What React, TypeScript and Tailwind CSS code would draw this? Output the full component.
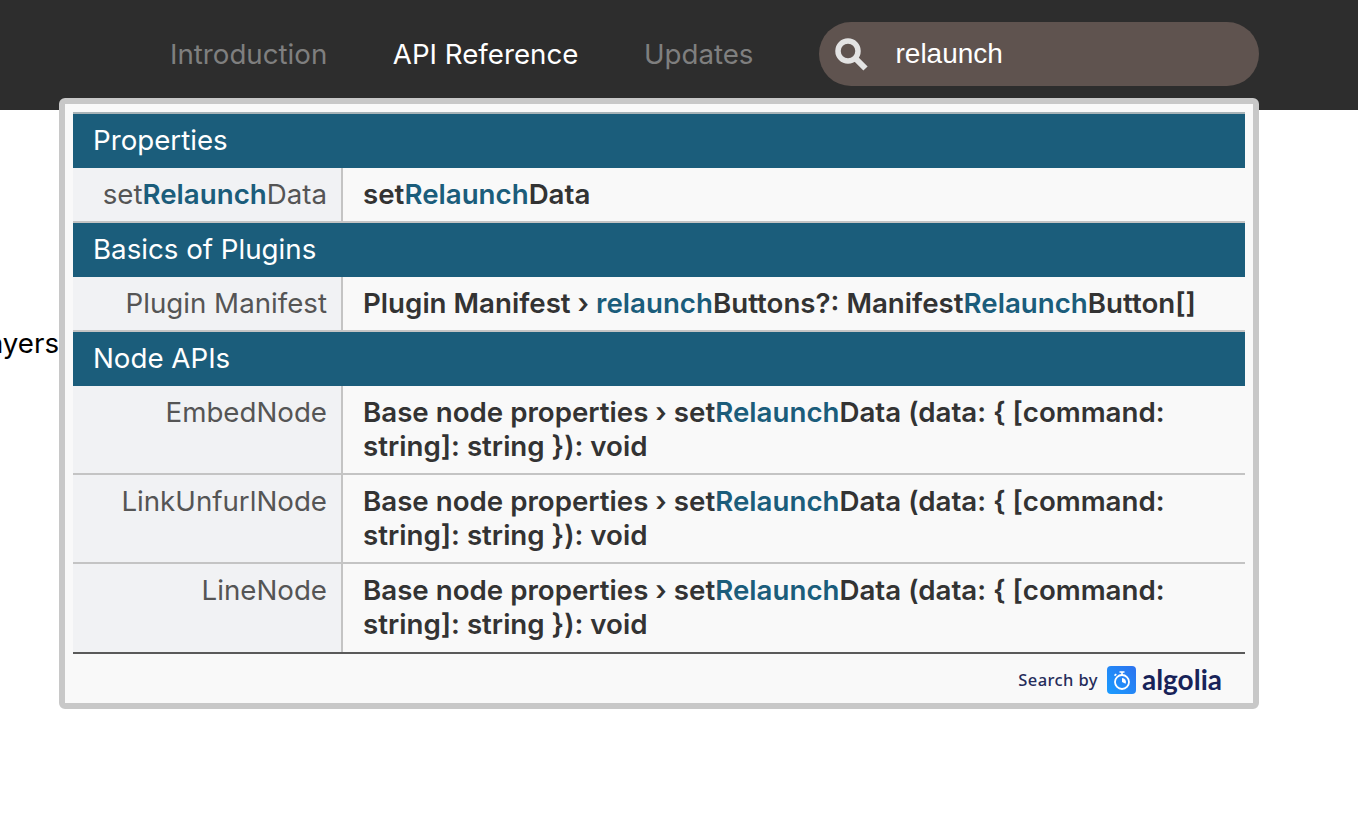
const font = { inter: "font-['Inter',sans-serif]" };

type Part = { text: string; hit?: boolean };
type Row = { label: Part[]; title: Part[]; tall?: boolean };
type Section = { name: string; rows: Row[] };

const baseNodeTitle: Part[] = [
  { text: "Base node properties › set" },
  { text: "Relaunch", hit: true },
  { text: "Data (data: { [command: string]: string }): void" },
];

const sections: Section[] = [
  {
    name: "Properties",
    rows: [
      {
        label: [{ text: "set" }, { text: "Relaunch", hit: true }, { text: "Data" }],
        title: [{ text: "set" }, { text: "Relaunch", hit: true }, { text: "Data" }],
      },
    ],
  },
  {
    name: "Basics of Plugins",
    rows: [
      {
        label: [{ text: "Plugin Manifest" }],
        title: [
          { text: "Plugin Manifest › " },
          { text: "relaunch", hit: true },
          { text: "Buttons?: Manifest" },
          { text: "Relaunch", hit: true },
          { text: "Button[]" },
        ],
      },
    ],
  },
  {
    name: "Node APIs",
    rows: [
      { label: [{ text: "EmbedNode" }], title: baseNodeTitle, tall: true },
      { label: [{ text: "LinkUnfurlNode" }], title: baseNodeTitle, tall: true },
      { label: [{ text: "LineNode" }], title: baseNodeTitle, tall: true },
    ],
  },
];

function Highlighted({ parts }: { parts: Part[] }) {
  return (
    <>
      {parts.map((part, i) =>
        part.hit ? (
          <span key={i} className="font-semibold text-[#1b5d7b]">
            {part.text}
          </span>
        ) : (
          <span key={i}>{part.text}</span>
        )
      )}
    </>
  );
}

function SearchIcon() {
  return (
    <svg width="34" height="34" viewBox="0 0 34 34" fill="none" className="shrink-0">
      <circle cx="14" cy="14" r="10" stroke="#e3e3e3" strokeWidth="5.5" />
      <path d="M21 21l10.5 10.5" stroke="#e3e3e3" strokeWidth="6" />
    </svg>
  );
}

function AlgoliaMark() {
  return (
    <svg width="29" height="28" viewBox="0 0 29 28" fill="none" className="shrink-0">
      <defs>
        <linearGradient id="algoliaBg" x1="0" y1="28" x2="29" y2="0" gradientUnits="userSpaceOnUse">
          <stop stopColor="#1a9cff" />
          <stop offset="1" stopColor="#2d72ee" />
        </linearGradient>
      </defs>
      <rect width="29" height="28" rx="4" fill="url(#algoliaBg)" />
      <circle cx="15" cy="16" r="7" stroke="#fff" strokeWidth="1.8" />
      <path d="M15 16V12A4 4 0 0 1 18.6 17.7Z" fill="#fff" />
      <path d="M12.5 6h5M15 6v3" stroke="#fff" strokeWidth="1.6" />
      <path d="M7.5 9.7l1.8-1.6" stroke="#fff" strokeWidth="1.6" />
    </svg>
  );
}

function ResultRow({ row, last }: { row: Row; last: boolean }) {
  return (
    <div
      className={`flex border-b-2 ${last ? "h-[90px] border-[#5a5a5a]" : "border-[#c4c4c4]"} ${
        row.tall ? (last ? "" : "h-[89px]") : "h-[55px]"
      }`}
    >
      <div className="w-[270px] shrink-0 border-r-2 border-[#c4c4c4] bg-[#f1f2f4] pr-[14px] pt-[9px] text-right text-[#555555]">
        <Highlighted parts={row.label} />
      </div>
      <div className="flex-1 pl-[20px] pr-[40px] pt-[9px] font-semibold text-[#333333]">
        <Highlighted parts={row.title} />
      </div>
    </div>
  );
}

export default function App() {
  return (
    <div className={`relative h-[830px] w-[1358px] overflow-hidden bg-white ${font.inter} text-[27.7px] leading-[34px]`}>
      <header className="flex h-[110px] items-center bg-[#2d2d2d] pl-[170px]">
        <nav className="mb-[2px] flex gap-[65.5px]">
          <a className="text-[#7f7f7f]">Introduction</a>
          <a className="text-white">API Reference</a>
          <a className="text-[#7f7f7f]">Updates</a>
        </nav>
        <div className="mb-[2px] ml-[66px] flex h-[64px] w-[440px] items-center rounded-[32px] bg-[#5f534f] pl-[15px]">
          <SearchIcon />
          <span className="ml-[27px] font-['Liberation_Sans',sans-serif] text-[28px] text-white">relaunch</span>
        </div>
      </header>

      <main className="flex w-[59px] justify-end overflow-hidden pt-[216px] text-black">
        <span>layers</span>
      </main>

      <div className="absolute left-[59px] top-[98px] w-[1200px] rounded-[6px] border-[6px] border-[#c8c8c8] bg-[#f9f9f9] px-[8px] pb-[2px] pt-[8px]">
        <div className="border-t-2 border-[#a9b4b8]">
          {sections.map((section, s) => (
            <section key={section.name}>
              <div className="flex h-[54px] items-center bg-[#1b5d7b] pb-[2px] pl-[20px] text-white">{section.name}</div>
              {section.rows.map((row, r) => (
                <ResultRow
                  key={row.label.map((p) => p.text).join("")}
                  row={row}
                  last={s === sections.length - 1 && r === section.rows.length - 1}
                />
              ))}
            </section>
          ))}
        </div>
        <div className="flex h-[47px] items-center justify-end pr-[23px] pt-[5px]">
          <span className="font-['Noto_Sans',sans-serif] text-[16.5px] font-medium leading-none tracking-[0.4px] text-[#252c5a]">
            Search by
          </span>
          <span className="ml-[9px] flex">
            <AlgoliaMark />
          </span>
          <span className="mb-[3px] ml-[6px] font-['Lato',sans-serif] text-[28px] font-bold leading-none text-[#182359]">
            algolia
          </span>
        </div>
      </div>
    </div>
  );
}
